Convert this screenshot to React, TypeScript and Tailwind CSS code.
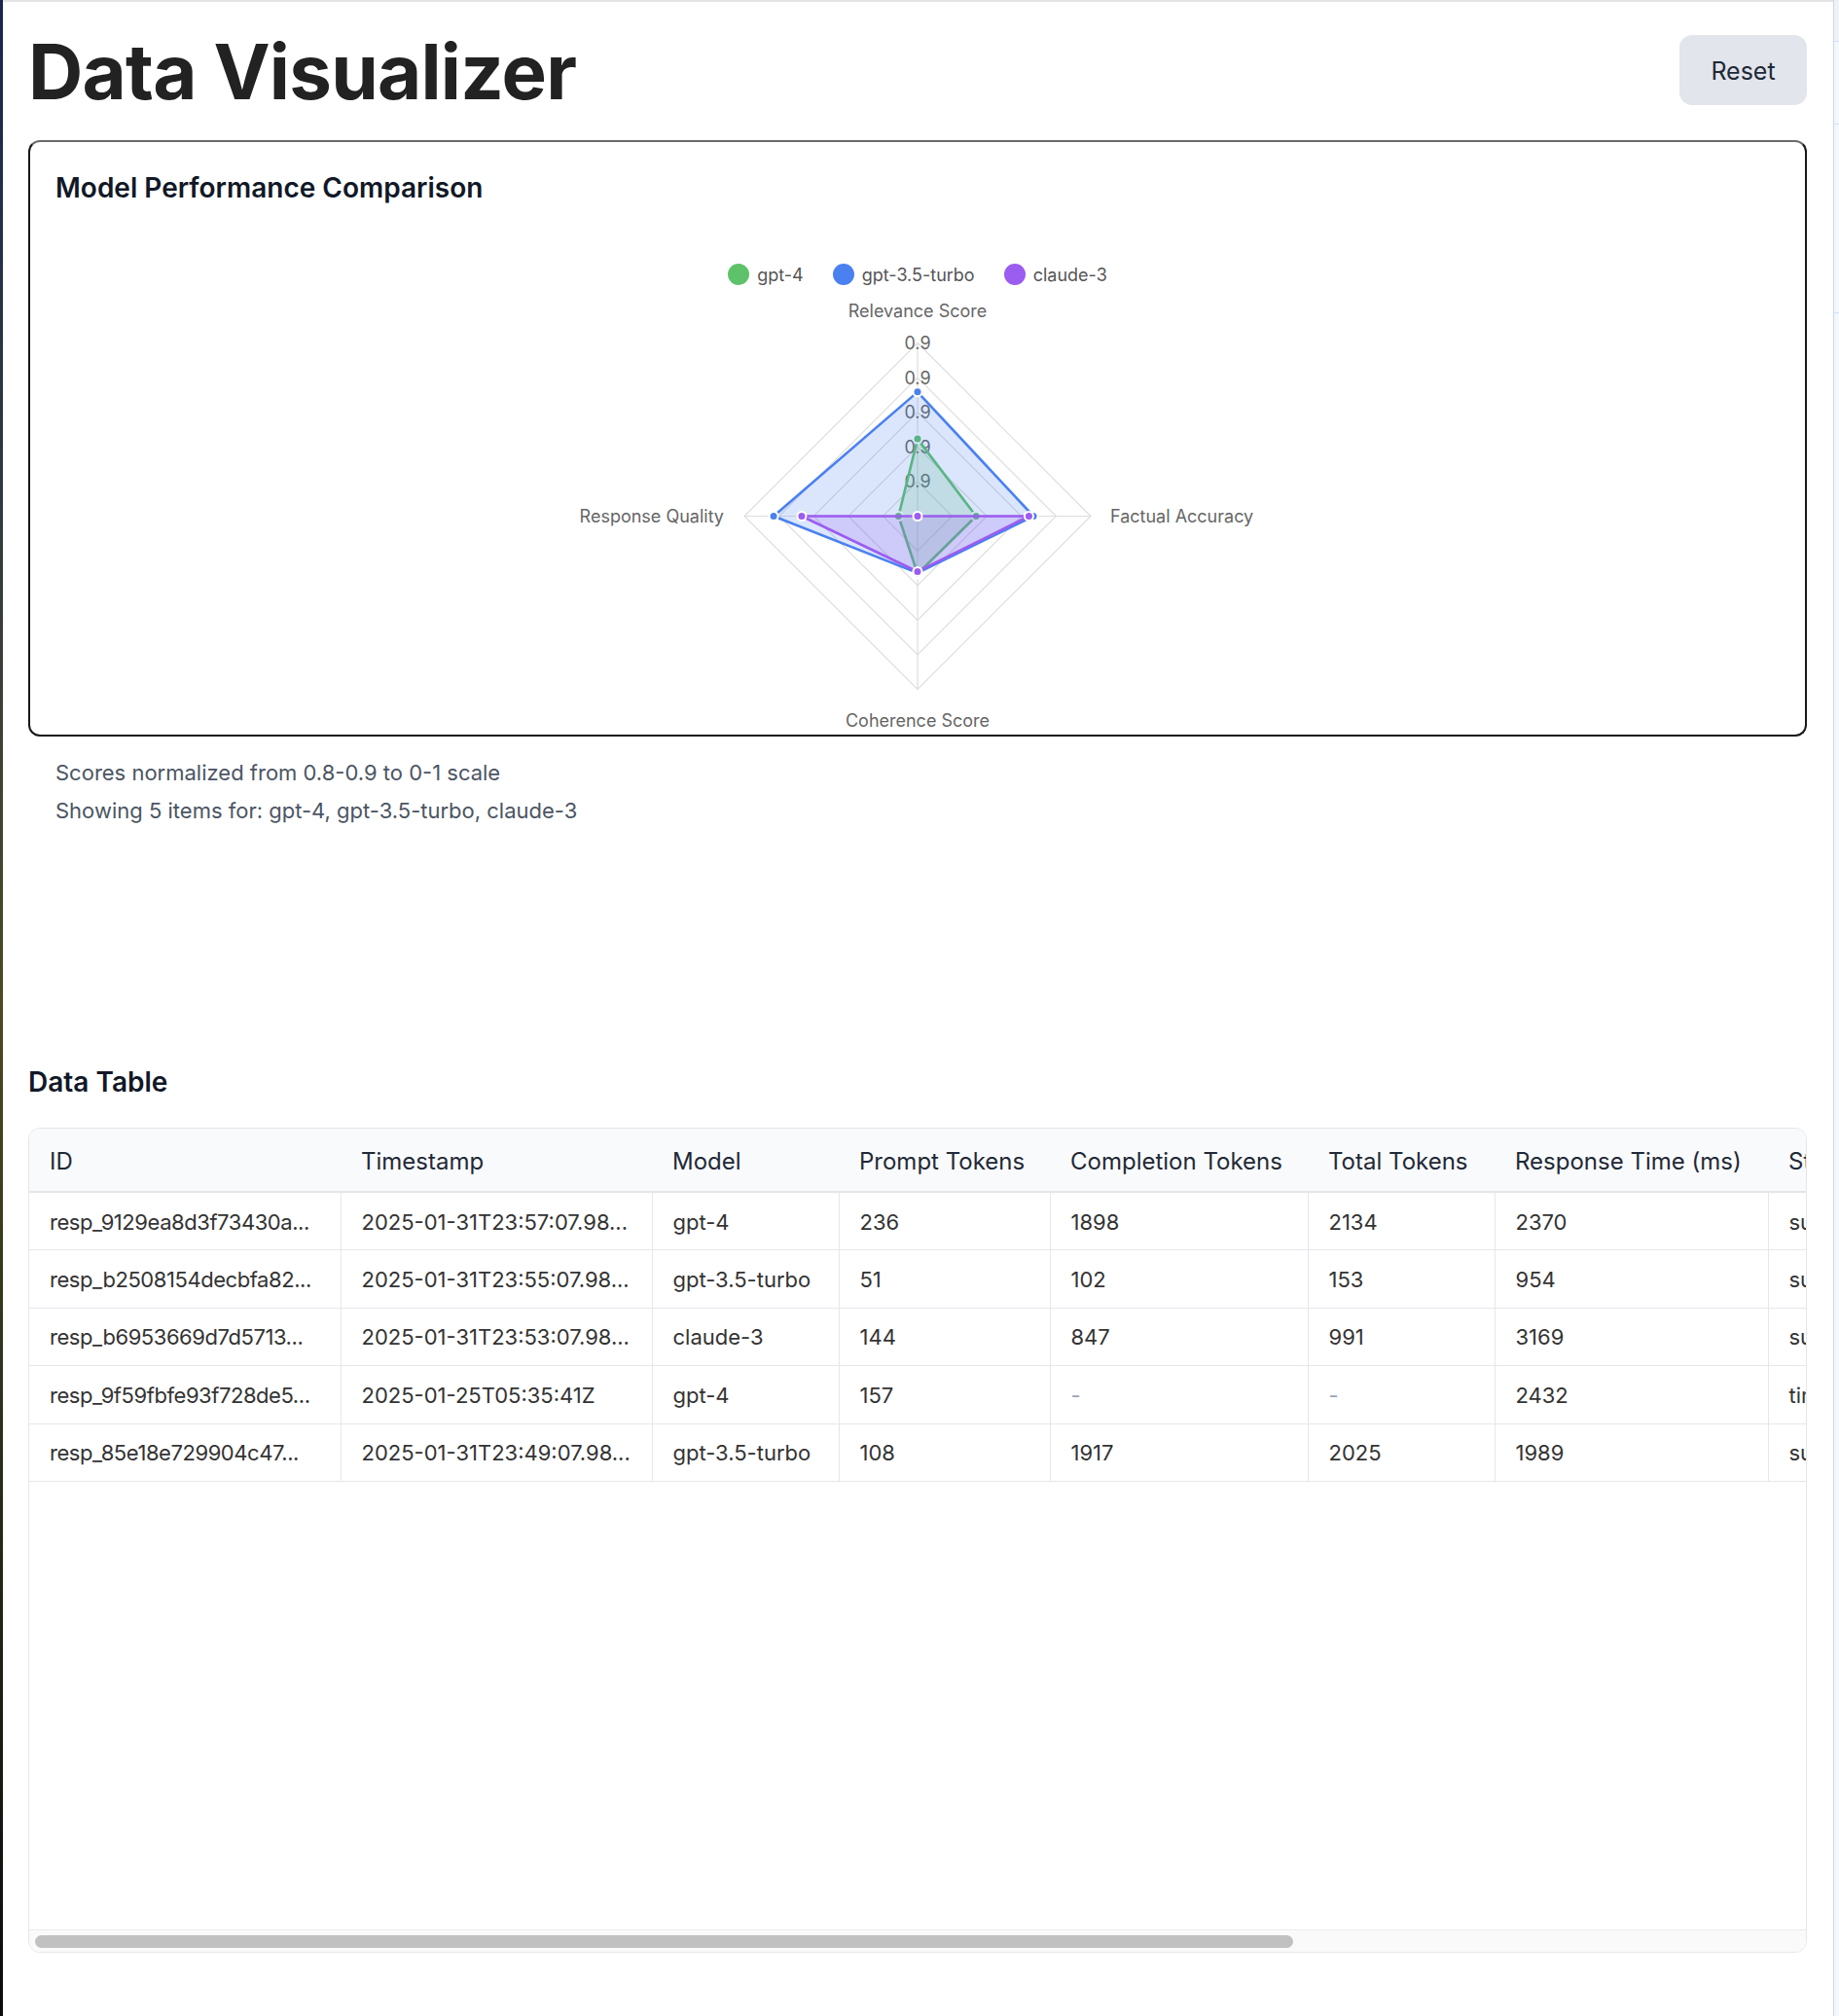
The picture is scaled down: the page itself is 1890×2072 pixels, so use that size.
import React from "react";

type Row = {
  id: string;
  timestamp: string;
  model: string;
  prompt: number;
  completion: number | null;
  total: number | null;
  time: number;
  status: string;
  relevance: number;
  factual: number;
  coherence: number;
};

const rows: Row[] = [
  { id: "resp_9129ea8d3f73430a...", timestamp: "2025-01-31T23:57:07.98...", model: "gpt-4", prompt: 236, completion: 1898, total: 2134, time: 2370, status: "success", relevance: 0.87, factual: 0.84, coherence: 0.83 },
  { id: "resp_b2508154decbfa82...", timestamp: "2025-01-31T23:55:07.98...", model: "gpt-3.5-turbo", prompt: 51, completion: 102, total: 153, time: 954, status: "success", relevance: 0.89, factual: 0.88, coherence: 0.83 },
  { id: "resp_b6953669d7d5713...", timestamp: "2025-01-31T23:53:07.98...", model: "claude-3", prompt: 144, completion: 847, total: 991, time: 3169, status: "success", relevance: 0.8, factual: 0.87, coherence: 0.83 },
  { id: "resp_9f59fbfe93f728de5...", timestamp: "2025-01-25T05:35:41Z", model: "gpt-4", prompt: 157, completion: null, total: null, time: 2432, status: "timeout", relevance: 0.85, factual: 0.82, coherence: 0.84 },
  { id: "resp_85e18e729904c47...", timestamp: "2025-01-31T23:49:07.98...", model: "gpt-3.5-turbo", prompt: 108, completion: 1917, total: 2025, time: 1989, status: "success", relevance: 0.88, factual: 0.86, coherence: 0.82 },
];

const columns = [
  { label: "ID", width: 320 },
  { label: "Timestamp", width: 320 },
  { label: "Model", width: 192 },
  { label: "Prompt Tokens", width: 217 },
  { label: "Completion Tokens", width: 265 },
  { label: "Total Tokens", width: 192 },
  { label: "Response Time (ms)", width: 281 },
  { label: "Status", width: 150 },
  { label: "Relevance Score", width: 200 },
  { label: "Factual Accuracy", width: 210 },
  { label: "Coherence Score", width: 210 },
];

// values as fraction of the outer radius: top, right, bottom, left
const series = [
  { name: "gpt-4", color: "#5ec26a", values: [0.446, 0.338, 0.333, 0.11] },
  { name: "gpt-3.5-turbo", color: "#4a80f0", values: [0.717, 0.669, 0.328, 0.831] },
  { name: "claude-3", color: "#9b5cf0", values: [0, 0.643, 0.32, 0.669] },
];

const cx = 886;
const cy = 237.5;
const R = 178;

function point(i: number, r: number): [number, number] {
  if (i === 0) return [cx, cy - r];
  if (i === 1) return [cx + r, cy];
  if (i === 2) return [cx, cy + r];
  return [cx - r, cy];
}

function RadarChart() {
  const levels = [1, 2, 3, 4, 5];
  return (
    <svg width="1772" height="457" viewBox="0 0 1772 457" className="block">
      {levels.map((k) => (
        <polygon
          key={k}
          points={[0, 1, 2, 3].map((i) => point(i, (R * k) / 5).join(",")).join(" ")}
          fill="none"
          stroke="#dedede"
          strokeWidth="1.2"
        />
      ))}
      {[0, 1, 2, 3].map((i) => {
        const [x, y] = point(i, R);
        return <line key={i} x1={cx} y1={cy} x2={x} y2={y} stroke="#dedede" strokeWidth="1.2" />;
      })}
      {levels.map((k) => (
        <text key={k} x={cx} y={cy - (R * k) / 5} textAnchor="middle" dominantBaseline="central" fontSize="18" fill="#666">
          0.9
        </text>
      ))}
      <text x={cx} y={cy - R - 33.5} textAnchor="middle" dominantBaseline="central" fontSize="18" fill="#666">
        Relevance Score
      </text>
      <text x={cx + R + 20} y={cy} textAnchor="start" dominantBaseline="central" fontSize="18" fill="#666">
        Factual Accuracy
      </text>
      <text x={cx} y={cy + R + 32} textAnchor="middle" dominantBaseline="central" fontSize="18" fill="#666">
        Coherence Score
      </text>
      <text x={cx - R - 21} y={cy} textAnchor="end" dominantBaseline="central" fontSize="18" fill="#666">
        Response Quality
      </text>
      {series.map((s) => {
        const pts = s.values.map((v, i) => point(i, v * R));
        return (
          <g key={s.name}>
            <polygon
              points={pts.map((p) => p.join(",")).join(" ")}
              fill={s.color}
              fillOpacity="0.2"
              stroke={s.color}
              strokeWidth="2.6"
              strokeLinejoin="round"
            />
            {pts.map(([x, y], i) => (
              <circle key={i} cx={x} cy={y} r="4.5" fill={s.color} stroke="#fff" strokeWidth="2" />
            ))}
          </g>
        );
      })}
    </svg>
  );
}

export default function App() {
  return (
    <div className="flex min-h-[2072px] bg-white font-['Inter',sans-serif]">
      <div className="w-[3px] shrink-0 bg-linear-to-b from-[#1a2550] via-[#4b4a22] to-[#0b0b0b]" />

      <main className="min-w-0 flex-1 border-t-2 border-[#e4e4e4] pl-[26px] pr-[27px]">
        <div className="flex items-start justify-between pt-[33px]">
          <h1 className="text-[78px] leading-none font-bold tracking-[-0.01em] text-[#222]">Data Visualizer</h1>
          <button className="mt-[1px] h-[72px] w-[131px] rounded-[13px] bg-[#e2e5eb] pt-[4px] text-[25px] text-[#1f2937]">
            Reset
          </button>
        </div>

        <div className="mt-[31px] rounded-[12px] border-2 border-[#181818] border-t-[#6a6a6a] px-[26px] pt-[26px] pb-[5px]">
          <h2 className="text-[28px] leading-[42px] font-semibold text-[#111827]">
            Model Performance Comparison
          </h2>
          <div className="mt-[57px] flex h-[22px] items-center justify-center gap-[30px]">
            {series.map((s) => (
              <div key={s.name} className="flex items-center gap-[8px]">
                <span className="h-[22px] w-[22px] rounded-full" style={{ backgroundColor: s.color }} />
                <span className="text-[18px] text-[#555]">{s.name}</span>
              </div>
            ))}
          </div>
          <RadarChart />
        </div>

        <div className="mt-[21px] flex flex-col gap-[7px] pl-[28px] text-[22px] leading-[32px] text-[#4b5563]">
          <p>Scores normalized from 0.8-0.9 to 0-1 scale</p>
          <p>Showing 5 items for: gpt-4, gpt-3.5-turbo, claude-3</p>
        </div>

        <h2 className="mt-[242px] text-[28px] leading-[42px] font-semibold text-[#111827]">Data Table</h2>

        <div className="mt-[26px] flex h-[848px] flex-col overflow-hidden rounded-[12px] border border-[#e5e7eb]">
          <div className="min-h-0 flex-1 overflow-x-auto">
            <table className="w-[2557px] table-fixed border-collapse text-left">
              <colgroup>
                {columns.map((c) => (
                  <col key={c.label} style={{ width: c.width }} />
                ))}
              </colgroup>
              <thead className="bg-[#f9fafb]">
                <tr className="h-[65px] border-b-2 border-[#e3e5e9]">
                  {columns.map((c) => (
                    <th key={c.label} className="px-[21px] pt-[4px] text-[24px] font-normal whitespace-nowrap text-[#1f2937]">
                      {c.label}
                    </th>
                  ))}
                </tr>
              </thead>
              <tbody>
                {rows.map((r) => {
                  const cells: (string | number | null)[] = [
                    r.id,
                    r.timestamp,
                    r.model,
                    r.prompt,
                    r.completion,
                    r.total,
                    r.time,
                    r.status,
                    r.relevance,
                    r.factual,
                    r.coherence,
                  ];
                  return (
                    <tr key={r.id} className="h-[59.5px] border-b border-[#e5e7eb]">
                      {cells.map((v, i) => (
                        <td
                          key={i}
                          className={
                            "overflow-hidden border-r border-[#e5e7eb] px-[21px] pt-[2px] text-[22px] text-ellipsis whitespace-nowrap text-[#333]" +
                            (i === 0 ? " tracking-[-0.02em]" : "")
                          }
                        >
                          {v === null ? <span className="text-[#9ca3af]">-</span> : v}
                        </td>
                      ))}
                    </tr>
                  );
                })}
              </tbody>
            </table>
          </div>
          {/* horizontal scrollbar */}
          <div className="h-[23px] shrink-0 border-t border-[#ebebeb] bg-[#fafafa] px-[6px] pt-[5px]">
            <div className="h-[13px] w-[1293px] rounded-full bg-[#c1c1c1]" />
          </div>
        </div>
      </main>

      <div className="flex w-[6px] shrink-0 flex-col border-l border-[#c6d8f6] bg-[#f4f7fc]">
        <div className="h-[43px] border-b border-[#d3e1f8] bg-[#f0f2f6]" />
        <div className="h-[85px] border-b border-[#d3e1f8]" />
        <div className="h-[194px] border-b border-[#d3e1f8]" />
      </div>
    </div>
  );
}
